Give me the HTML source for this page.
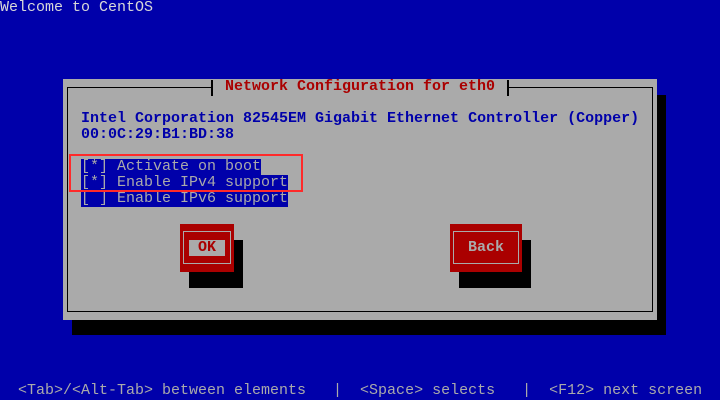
<!DOCTYPE html>
<html><head><meta charset="utf-8"><style>
html,body{margin:0;padding:0}
body{width:720px;height:400px;background:#0000aa;position:relative;overflow:hidden;font-family:"Liberation Mono",monospace;font-size:15px;line-height:16px;font-weight:bold}
div,span{position:absolute;white-space:pre}
.t{height:16px}
</style></head><body>
<div class="t" style="left:0;top:0;color:#d8d8d8;font-weight:normal">Welcome to CentOS</div>
<div style="left:72px;top:95px;width:594px;height:240px;background:#000"></div>
<div style="left:63px;top:79px;width:594px;height:241px;background:#aaaaaa"></div>
<div style="left:67px;top:87px;width:584px;height:223px;border:1px solid #000"></div>
<div style="left:211px;top:80px;width:294px;height:16px;background:#aaaaaa;border-left:2px solid #000;border-right:2px solid #000"></div>
<div class="t" style="left:225px;top:79px;color:#aa0000">Network Configuration for eth0</div>
<div class="t" style="left:81px;top:111px;color:#0000aa">Intel Corporation 82545EM Gigabit Ethernet Controller (Copper)</div>
<div class="t" style="left:81px;top:127px;color:#0000aa">00:0C:29:B1:BD:38</div>
<div class="t" style="left:81px;top:159px;color:#aaaaaa;background:#0000aa;font-weight:normal">[*] Activate on boot</div>
<div class="t" style="left:81px;top:175px;color:#aaaaaa;background:#0000aa;font-weight:normal">[*] Enable IPv4 support</div>
<div class="t" style="left:81px;top:191px;color:#aaaaaa;background:#0000aa;font-weight:normal">[ ] Enable IPv6 support</div>
<div style="left:69px;top:154px;width:230px;height:34px;border:2px solid #ff2a2a"></div>
<div style="left:189px;top:240px;width:54px;height:48px;background:#000"></div>
<div style="left:180px;top:224px;width:54px;height:48px;background:#aa0000"></div>
<div style="left:183px;top:231px;width:46px;height:31px;border:1px solid #aaaaaa"></div>
<div class="t" style="left:189px;top:240px;width:36px;background:#aaaaaa;color:#aa0000;text-align:center">OK</div>
<div style="left:459px;top:240px;width:72px;height:48px;background:#000"></div>
<div style="left:450px;top:224px;width:72px;height:48px;background:#aa0000"></div>
<div style="left:453px;top:231px;width:64px;height:31px;border:1px solid #aaaaaa"></div>
<div class="t" style="left:468px;top:240px;color:#aaaaaa">Back</div>
<div class="t" style="left:18px;top:383px;color:#aaaaaa;font-weight:normal">&lt;Tab&gt;/&lt;Alt-Tab&gt; between elements   |  &lt;Space&gt; selects   |  &lt;F12&gt; next screen</div>
</body></html>
